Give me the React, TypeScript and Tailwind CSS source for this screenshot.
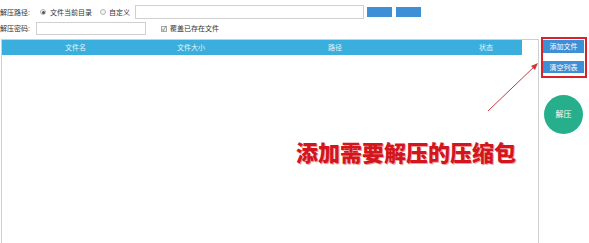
import React from "react";

const font = { fontFamily: '"Liberation Sans", "Noto Sans CJK SC", sans-serif' };

function Radio({ checked }: { checked?: boolean }) {
  return (
    <span className="flex h-[6px] w-[6px] shrink-0 items-center justify-center rounded-full border border-[#b5b5b5] bg-[#f4f4f4]">
      {checked && <span className="h-[3px] w-[3px] rounded-full bg-[#555]" />}
    </span>
  );
}

export default function App() {
  return (
    <div
      className="relative h-[243px] w-[589px] overflow-hidden bg-white text-[7px] leading-[9px] text-[#333]"
      style={font}
    >
      {/* path row */}
      <div className="mt-[5px] flex h-[14px] items-center">
        <span className="w-[40px] shrink-0">解压路径:</span>
        <Radio checked />
        <span className="ml-[4px] w-[50px] shrink-0">文件当前目录</span>
        <Radio />
        <span className="ml-[3px] w-[24px] shrink-0">自定义</span>
        <div className="ml-[2px] h-[14px] w-[229px] shrink-0 border border-[#d0d0d0] bg-white" />
        <div className="ml-[3px] h-[10px] w-[25px] shrink-0 bg-[#3d8fd6]" />
        <div className="ml-[4px] h-[10px] w-[25px] shrink-0 bg-[#3d8fd6]" />
      </div>

      {/* password row */}
      <div className="mt-[3px] flex h-[13px] items-center">
        <span className="w-[36px] shrink-0">解压密码:</span>
        <div className="h-[13px] w-[110px] shrink-0 border border-[#d0d0d0] bg-white" />
        <span className="ml-[15px] flex h-[6px] w-[6px] shrink-0 items-center justify-center border border-[#aaa] bg-[#f2f2f2] text-[6px] leading-none text-[#555]">
          ✓
        </span>
        <span className="ml-[3px]">覆盖已存在文件</span>
      </div>

      {/* body */}
      <div className="mt-[2px] flex">
        <div className="ml-[1px] mt-[2px] h-[210px] w-[538px] shrink-0 border-x border-t border-[#cfcfcf]">
          <div className="flex h-[15px] w-[520px] items-center bg-[#3aaedc] text-[#e3f4fb]">
            <span className="ml-[63px] shrink-0">文件名</span>
            <span className="ml-[91px] shrink-0">文件大小</span>
            <span className="ml-[123px] shrink-0">路径</span>
            <span className="ml-[137px] shrink-0">状态</span>
          </div>
          <div
            className="mt-[84px] pl-[294px] text-[22px] font-black leading-[24px] text-[#d3151c]"
            style={{ fontFamily: '"Noto Sans CJK SC", sans-serif', textShadow: "1px 1px 0 #f0a0a0" }}
          >
            添加需要解压的压缩包
          </div>
        </div>

        <div className="flex flex-col pl-[2px]">
          <div className="flex w-[46px] flex-col border-2 border-[#d8232a] pb-[3px] pt-[1px]">
            <div className="flex h-[13px] w-[41px] items-center justify-center bg-[#3d8fd6] text-white">
              添加文件
            </div>
            <div className="mt-[8px] flex h-[12px] w-[41px] items-center justify-center bg-[#3d8fd6] text-white">
              清空列表
            </div>
          </div>
          <div className="ml-[3px] mt-[17px] flex h-[39px] w-[39px] items-center justify-center rounded-full bg-[#27ae8b] text-[8px] text-white">
            解压
          </div>
        </div>
      </div>

      {/* annotation arrow */}
      <svg className="pointer-events-none absolute left-0 top-0" width="589" height="243">
        <line x1="488" y1="111" x2="536" y2="65" stroke="#c8383c" strokeWidth="1" />
        <polygon points="538,63 531,66 535,70" fill="#c8383c" />
      </svg>
    </div>
  );
}
